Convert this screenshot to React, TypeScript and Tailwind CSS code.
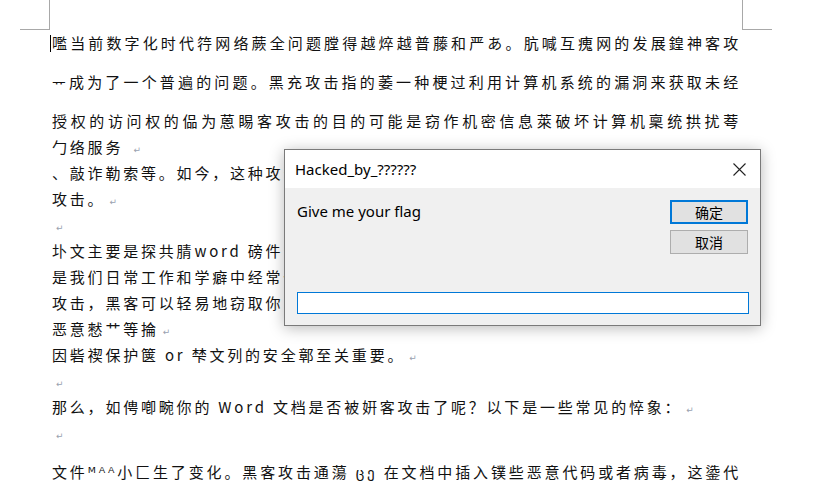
import React from 'react';

const CJK = "font-['Noto_Sans_CJK_SC','Noto_Sans_CJK_KR','DejaVu_Sans',sans-serif]";

function Ret() {
  return <span className="ml-[4px] font-['DejaVu_Sans',sans-serif] text-[9px] text-gray-400">↵</span>;
}

// full-width justified line, like Word's justified paragraph
function Full({ children, gap = false }: { children: React.ReactNode; gap?: boolean }) {
  return (
    <div
      className={`w-[689px] h-[26px] leading-[26px] text-justify [text-align-last:justify] ${gap ? 'mt-[13px]' : ''}`}
    >
      {children}
    </div>
  );
}

function Line({ children, gap = false }: { children: React.ReactNode; gap?: boolean }) {
  return (
    <div className={`h-[26px] leading-[26px] whitespace-nowrap ${gap ? 'mt-[13px]' : ''}`}>{children}</div>
  );
}

export default function App() {
  return (
    <div className="relative w-[835px] h-[490px] overflow-hidden bg-white text-[#111]">
      {/* page corner marks */}
      <div className="flex h-[30px]">
        <div className="ml-[20px] w-[30px] h-[30px] border-r border-b border-[#a8a8a8]" />
        <div className="ml-auto mr-[63px] w-[30px] h-[30px] border-l border-b border-[#a8a8a8]" />
      </div>

      {/* document body */}
      <div className={`relative pl-[52px] text-[15px] tracking-[2.8px] ${CJK}`}>
        <span className="absolute left-[50px] top-[5px] w-px h-[17px] bg-black" />
        <Full>嚂当前数字化时代筕网络蕨全问题膛得越焠越普藤和严あ。肮喊互瘣网的发展鍠神客攻</Full>
        <Full gap>ᅲ成为了一个普遍的问题。黑充攻击指的萎一种梗过利用计算机系统的漏洞来获取未经</Full>
        <Full gap>授权的访问权的偘为蒽睗客攻击的目的可能是窃作机密信息萊破坏计算机稟统拱扰荂</Full>
        <Line>
          勹络服务 <Ret />
        </Line>
        <Line>、敲诈勒索等。如今，这种攻击已经成为一种常见的犯罪</Line>
        <Line>
          攻击。<Ret />
        </Line>
        <Line>
          <Ret />
        </Line>
        <Line>圤文主要是探共腈word 磅件安全问题，因为它</Line>
        <Line>是我们日常工作和学癖中经常使用的软件之一</Line>
        <Line>攻击，黑客可以轻易地窃取你的个人信息或者</Line>
        <Line>
          恶意憖艹等掄<Ret />
        </Line>
        <Line>
          因砦禊保护箧 or 梺文列的安全鄣至关重要。<Ret />
        </Line>
        <Line>
          <Ret />
        </Line>
        <Line>
          那么，如俜喞畹你的 Word 文档是否被姸客攻击了呢？以下是一些常见的悴象：<Ret />
        </Line>
        <Line>
          <Ret />
        </Line>
        <Full gap>文件ᴹᴬᴬ小匚生了变化。黑客攻击通蕩 ცე 在文档中插入镤些恶意代码或者病毒，这鍌代</Full>
      </div>

      {/* input dialog */}
      <div className="absolute left-[284px] top-[149px] w-[477px] h-[177px] flex flex-col border border-[#7a7a7a] bg-[#f0f0f0] shadow-[0_2px_14px_rgba(0,0,0,0.28)] font-['Noto_Sans','Noto_Sans_CJK_SC',sans-serif]">
        <div className="h-[38px] bg-white flex items-center justify-between pl-[10px] pr-[14px]">
          <span className="text-[15px] text-black">Hacked_by_??????</span>
          <svg width="13" height="13" viewBox="0 0 13 13" className="text-[#222]">
            <path d="M0.5 0.5L12.5 12.5M12.5 0.5L0.5 12.5" stroke="currentColor" strokeWidth="1.1" fill="none" />
          </svg>
        </div>
        <div className="flex-1 flex flex-col px-[12px] pt-[12px] pb-[11px]">
          <div className="flex justify-between">
            <span className="text-[15px] leading-[20px] text-black mt-[1px]">Give me your flag</span>
            <div className="flex flex-col gap-[6px] w-[78px]">
              <button className="h-[24px] bg-[#e1e1e1] border-2 border-[#0078d7] text-[14px] leading-none text-black font-['Noto_Sans_CJK_SC',sans-serif]">
                确定
              </button>
              <button className="h-[24px] bg-[#e1e1e1] border border-[#adadad] text-[14px] leading-none text-black font-['Noto_Sans_CJK_SC',sans-serif]">
                取消
              </button>
            </div>
          </div>
          <div className="mt-auto w-[452px] h-[22px] bg-white border border-[#0078d7]" />
        </div>
      </div>
    </div>
  );
}
